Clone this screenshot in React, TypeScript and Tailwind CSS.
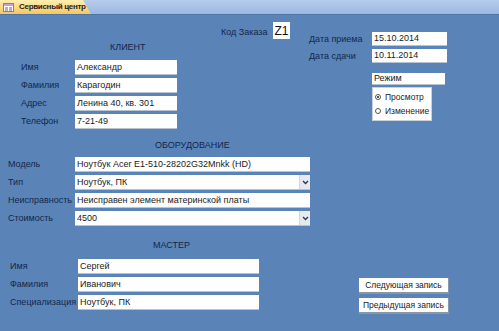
const font = { fontFamily: '"Liberation Sans", Arial, sans-serif' }

function Field({ value, w, h = 15, select = false }: { value: string; w: number; h?: number; select?: boolean }) {
  return (
    <div
      className="flex items-center bg-white border-b border-[#b7c3d3] text-[#1b1b1b] text-[9px] pl-[2px] overflow-hidden whitespace-nowrap"
      style={{ width: w, height: h }}
    >
      <span className="flex-1">{value}</span>
      {select && (
        <span className="flex items-center justify-center w-[11px] h-full bg-[#e6eaf0] border-l border-[#cfd6e0]">
          <svg width="7" height="5" viewBox="0 0 7 5">
            <path d="M1 1 L3.5 3.5 L6 1" fill="none" stroke="#2a3550" strokeWidth="1.3" />
          </svg>
        </span>
      )}
    </div>
  )
}

function Row({ label, labelW, children }: { label: string; labelW: number; children: React.ReactNode }) {
  return (
    <div className="flex items-center h-[15px]">
      <span className="text-[#13264a] text-[9px] whitespace-nowrap" style={{ width: labelW }}>
        {label}
      </span>
      {children}
    </div>
  )
}

export default function App() {
  return (
    <div className="w-[499px] h-[331px] overflow-hidden bg-[#5a84b8] text-[9px] leading-none" style={font}>
      {/* tab bar */}
      <div className="h-[15px] bg-gradient-to-b from-[#b6cdec] to-[#9ab8e0] border-b border-[#4f74a6] flex items-end">
        <div className="h-[14px] w-[91px] flex items-center bg-gradient-to-b from-[#fff0b0] to-[#f8c55a] [clip-path:polygon(0_0,83px_0,91px_100%,0_100%)]">
          <svg width="11" height="9" viewBox="0 0 11 9" className="ml-[3px] shrink-0">
            <rect x="0.5" y="0.5" width="10" height="8" fill="#fff" stroke="#7a86a0" />
            <rect x="1" y="1" width="9" height="2" fill="#c7a0d8" />
            <path d="M2 5 H5 M2 7 H5 M6 5 H9 M6 7 H9" stroke="#7b5aa6" strokeWidth="1" />
          </svg>
          <span className="ml-[5px] font-bold text-[8px] tracking-[-0.3px] text-[#1d1d1d] whitespace-nowrap">Сервисный центр</span>
        </div>
      </div>

      {/* top area */}
      <div className="flex h-[120px]">
        <div className="w-[205px] pt-[26px]">
          <div className="ml-[110px] h-[12px] flex items-center text-[#13264a]">КЛИЕНТ</div>
          <div className="mt-[7px] ml-[21px] flex flex-col gap-[3px]">
            <Row label="Имя" labelW={54}><Field value="Александр" w={102} /></Row>
            <Row label="Фамилия" labelW={54}><Field value="Карагодин" w={102} /></Row>
            <Row label="Адрес" labelW={54}><Field value="Ленина 40, кв. 301" w={102} /></Row>
            <Row label="Телефон" labelW={54}><Field value="7-21-49" w={102} /></Row>
          </div>
        </div>
        <div className="w-[104px] pt-[7px] pl-[16px] flex items-start">
          <span className="mt-[6px] w-[52px] text-[#13264a] whitespace-nowrap">Код Заказа</span>
          <div className="w-[17px] h-[17px] bg-white flex items-center justify-center text-[12px] text-[#111]">Z1</div>
        </div>
        <div className="pt-[17px]">
          <div className="flex flex-col gap-[3px]">
            <div className="flex items-center h-[14px]">
              <span className="w-[63px] text-[#13264a]">Дата приема</span>
              <Field value="15.10.2014" w={75} h={14} />
            </div>
            <div className="flex items-center h-[14px]">
              <span className="w-[63px] text-[#13264a]">Дата сдачи</span>
              <Field value="10.11.2014" w={75} h={14} />
            </div>
          </div>
          <div className="ml-[63px] mt-[10px]">
            <Field value="Режим" w={73} h={12} />
            <div className="mt-[2px] w-[60px] h-[34px] bg-white border border-[#c9d1dc] flex flex-col justify-center gap-[5px] pl-[2px] text-[#1b1b1b] text-[8.5px]">
              <div className="flex items-center gap-[4px]">
                <span className="w-[6px] h-[6px] rounded-full border border-[#555] flex items-center justify-center">
                  <span className="w-[2px] h-[2px] rounded-full bg-[#222]" />
                </span>
                Просмотр
              </div>
              <div className="flex items-center gap-[4px]">
                <span className="w-[6px] h-[6px] rounded-full border border-[#555]" />
                Изменение
              </div>
            </div>
          </div>
        </div>
      </div>

      {/* equipment */}
      <div className="mt-[4px] ml-[155px] h-[12px] flex items-center text-[#13264a]">ОБОРУДОВАНИЕ</div>
      <div className="mt-[6px] ml-[8px] flex flex-col gap-[3px]">
        <Row label="Модель" labelW={67}><Field value="Ноутбук Acer E1-510-28202G32Mnkk (HD)" w={235} /></Row>
        <Row label="Тип" labelW={67}><Field value="Ноутбук, ПК" w={235} select /></Row>
        <Row label="Неисправность" labelW={67}><Field value="Неисправен элемент материнской платы" w={235} /></Row>
        <Row label="Стоимость" labelW={67}><Field value="4500" w={235} select /></Row>
      </div>

      {/* master */}
      <div className="flex">
        <div>
          <div className="mt-[13px] ml-[153px] h-[12px] flex items-center text-[#13264a]">МАСТЕР</div>
          <div className="mt-[8px] ml-[10px] flex flex-col gap-[3px]">
            <Row label="Имя" labelW={68}><Field value="Сергей" w={181} /></Row>
            <Row label="Фамилия" labelW={68}><Field value="Иванович" w={181} /></Row>
            <Row label="Специализация" labelW={68}><Field value="Ноутбук, ПК" w={181} /></Row>
          </div>
        </div>
        <div className="ml-[100px] mt-[52px] flex flex-col gap-[4px]">
          <button className="w-[90px] h-[16px] bg-white border-b-2 border-r border-[#8a96a8] text-[#1b1b1b] text-[8.5px] flex items-center justify-center whitespace-nowrap">
            Следующая запись
          </button>
          <button className="w-[90px] h-[16px] bg-white border-b-2 border-r border-[#8a96a8] text-[#1b1b1b] text-[8.5px] flex items-center justify-center whitespace-nowrap">
            Предыдущая запись
          </button>
        </div>
      </div>
    </div>
  )
}
